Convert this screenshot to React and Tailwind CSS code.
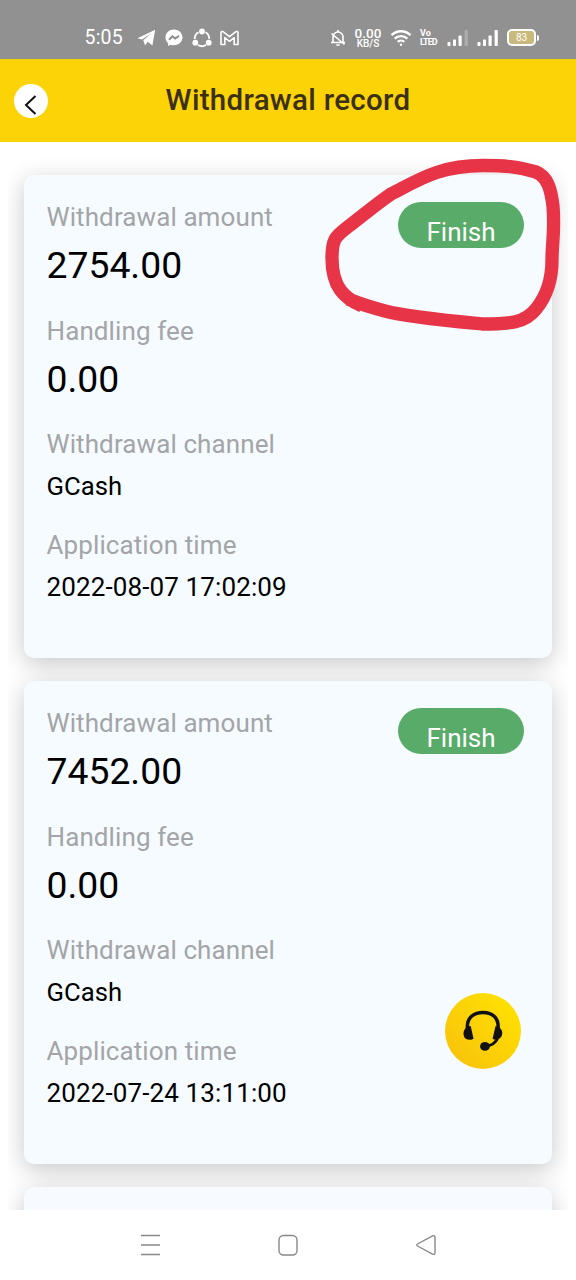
import React from 'react';

const records = [
  { amount: '2754.00', fee: '0.00', channel: 'GCash', time: '2022-08-07 17:02:09' },
  { amount: '7452.00', fee: '0.00', channel: 'GCash', time: '2022-07-24 13:11:00' },
];

function SignalBars({ dim }) {
  return (
    <svg className="h-[18px] w-[22px]" viewBox="0 0 22 18" fill="#fff">
      <rect x="0.5" y="13" width="3" height="4" rx="0.8" />
      <rect x="6" y="10.5" width="3" height="6.5" rx="0.8" />
      <rect x="11.5" y="6.5" width="3.2" height="10.5" rx="0.8" />
      <rect x="17.6" y="1" width="3.2" height="16" rx="0.8" fillOpacity={dim ? 0.25 : 1} />
    </svg>
  );
}

function StatusBar() {
  return (
    <header className="flex h-[59px] shrink-0 items-center bg-[#919191] pt-[16px] pl-[84.5px] text-white">
      <div className="flex h-[22px] w-[38.5px] items-center text-[19.5px] tracking-[0.2px] whitespace-nowrap">5:05</div>
      <svg className="ml-[14px] h-[18px] w-[20px]" viewBox="0 0 20 18" fill="#fff">
        <path d="M0.5 9.3 18.2 0.8 15.4 16.4 10.7 12.8 8.1 16.4 6.3 11.2 14.3 4.3 5 10.4z" />
      </svg>
      <svg className="ml-[8px] h-[18px] w-[18px]" viewBox="0 0 18 18">
        <path d="M9 .6C4.3.6.5 4 .5 8.6c0 2.4 1 4.4 2.6 5.7v2.7l2.5-1.3c1 .4 2.2.6 3.4.6 4.7 0 8.5-3.3 8.500-7.7S13.7.6 9 .6z" fill="#fff" />
        <path d="M4 10.8 7.3 7.3 10.2 9.6 14 6.8" fill="none" stroke="#8b8b8b" strokeWidth="1.9" />
      </svg>
      <svg className="ml-[9px] h-[20px] w-[20px]" viewBox="0 0 20 20">
        <path d="M6.5 4.2A7.2 7.2 0 0 0 2.8 11M6 17a7.5 7.5 0 0 0 8 0M17.2 11A7.2 7.2 0 0 0 13.5 4.2" fill="none" stroke="#fff" strokeWidth="1.8" />
        <circle cx="10" cy="3.5" r="2.9" fill="#fff" />
        <circle cx="3.3" cy="14.7" r="2.9" fill="#fff" />
        <circle cx="16.7" cy="14.7" r="2.9" fill="#fff" />
      </svg>
      <svg className="ml-[8px] h-[16px] w-[19px]" viewBox="0 0 19 16" fill="none" stroke="#fff" strokeWidth="1.6" strokeLinejoin="round">
        <path d="M1 14.5V2.6Q1.2 1 3 1.6L9.5 6.7 16 1.6Q17.8 1 18 2.6V14.5H14.2V7.7L9.5 11.3 4.8 7.7V14.5z" />
      </svg>

      <svg className="ml-[91px] h-[18px] w-[16px]" viewBox="0 0 16 18" fill="none" stroke="#fff" strokeWidth="1.6">
        <path d="M3 13V8a5 5 0 0 1 10 0v5M1 13.5h14M8 1v2M6.3 16h3.4M1.5 4.5 14.5 15.5" />
      </svg>
      <div className="ml-[7px] flex w-[30px] flex-col items-center whitespace-nowrap font-medium">
        <span className="text-[13.5px] leading-[12px]">0.00</span>
        <span className="text-[10px] leading-[10px]">KB/S</span>
      </div>
      <svg className="ml-[7px] h-[18px] w-[22px]" viewBox="0 0 22 18" fill="none" stroke="#fff" strokeWidth="2.4">
        <path d="M1.5 6.2a13.500 13.500 0 0 1 19 0M4.7 9.7a9 9 0 0 1 12.6 0M7.7 12.9a4.8 4.8 0 0 1 6.6 0" />
        <circle cx="11" cy="15.7" r="1.2" fill="#fff" stroke="none" />
      </svg>
      <div className="ml-[8px] flex w-[20px] flex-col whitespace-nowrap font-bold">
        <span className="text-[9px] leading-[9px]">Vo</span>
        <span className="text-[9px] leading-[9px] tracking-[-0.9px]">LTED</span>
      </div>
      <div className="ml-[7px] flex gap-[8px]">
        <SignalBars dim />
        <SignalBars />
      </div>
      <div className="ml-[8px] flex h-[17px] w-[29px] items-center justify-center rounded-[5px] border-2 border-white bg-[#c9b97d] text-[10px]">83</div>
      <div className="ml-px h-[6px] w-[2px] rounded-r bg-white" />
    </header>
  );
}

function TitleBar() {
  return (
    <div className="flex h-[83px] shrink-0 items-center bg-[#fcd306] pl-[14px]">
      <button className="flex h-[34px] w-[34px] items-center justify-center rounded-full bg-white">
        <svg className="mt-[9px] h-[20px] w-[14px]" viewBox="0 0 14 20" fill="none" stroke="#111" strokeWidth="2">
          <path d="M11.5 1 2 10 11.5 19" />
        </svg>
      </button>
      <h1 className="w-[480px] text-center text-[29.5px] font-medium tracking-[0.3px] whitespace-nowrap text-[#3b3013]">Withdrawal record</h1>
    </div>
  );
}

function Label({ children }) {
  return <div className="text-[26px] leading-[42px] tracking-[0.1px] text-[#a3a5a8]">{children}</div>;
}

function RecordCard({ record }) {
  return (
    <article className="flex h-[483px] shrink-0 justify-between rounded-[10px] bg-[#f6fbff] pt-[21px] pr-[28px] pl-[22.5px] shadow-[0_6px_24px_rgba(0,0,0,0.22)]">
      <div className="whitespace-nowrap">
        <Label>Withdrawal amount</Label>
        <div className="mb-[17.5px] text-[37.3px] leading-[54px]">{record.amount}</div>
        <Label>Handling fee</Label>
        <div className="mb-[17.5px] text-[37.3px] leading-[54px]">{record.fee}</div>
        <Label>Withdrawal channel</Label>
        <div className="mb-[16.5px] text-[25.7px] leading-[42px]">{record.channel}</div>
        <Label>Application time</Label>
        <div className="text-[26px] leading-[42px] tracking-[0.12px]">{record.time}</div>
      </div>
      <div className="mt-[6px] h-[46px] w-[126px] overflow-hidden rounded-full bg-[#58ab69] pt-[9px] text-center text-[26px] leading-[42px] text-white">
        Finish
      </div>
    </article>
  );
}

function NavBar() {
  return (
    <nav className="flex h-[70px] shrink-0 items-center justify-between bg-white px-[138px]">
      <svg className="h-[24px] w-[24px]" viewBox="0 0 24 24" stroke="#888" strokeWidth="1.5">
        <path d="M3 2.5h19M3 12h19M3 21.5h19" />
      </svg>
      <svg className="h-[24px] w-[24px]" viewBox="0 0 24 24" fill="none" stroke="#888" strokeWidth="1.4">
        <rect x="3" y="2.5" width="18" height="19.5" rx="4.5" />
      </svg>
      <svg className="h-[24px] w-[24px]" viewBox="0 0 24 24" fill="none" stroke="#888" strokeWidth="1.4" strokeLinejoin="round">
        <path d="M3.5 11 18.5 2.8Q21 2 21 4.5V19.5Q21 22 18.5 21.2L3.5 13Q2 12 3.5 11z" />
      </svg>
    </nav>
  );
}

export default function App() {
  return (
    <div className="relative flex h-[1280px] w-[576px] flex-col overflow-hidden bg-white font-[Roboto,sans-serif] text-black">
      <StatusBar />
      <TitleBar />
      <main className="mx-[8px] flex h-[1068px] shrink-0 flex-col gap-[23px] overflow-hidden px-[16px] pt-[33px]">
        {records.map((record) => (
          <RecordCard key={record.time} record={record} />
        ))}
        <div className="h-[60px] shrink-0 rounded-[10px] bg-[#f7fafe] shadow-[0_6px_24px_rgba(0,0,0,0.22)]" />
      </main>
      <NavBar />

      <button className="absolute top-[993px] left-[445px] flex h-[76px] w-[76px] items-center justify-center rounded-full bg-linear-to-tr from-[#f8bf0c] to-[#ffe500]">
        <svg className="mb-[3px] h-[43px] w-[42px]" viewBox="0 0 42 44" fill="none">
          <path d="M5 23v-4C5 9.5 12 4.5 21 4.5S36.5 9.5 36.5 19v4" stroke="#111" strokeWidth="3.6" />
          <path d="M7.5 18.5Q1 20 1 26.5 1.5 33 9 32.5L11.3 31.5 8.5 18.8zM33.8 18.8 30.8 31.5 33 32.5Q40.5 32 40.8 25.5 40.5 20 33.8 18.5z" fill="#111" />
          <path d="M36 31Q33 38 24 39" stroke="#111" strokeWidth="3" />
          <ellipse cx="23" cy="39.3" rx="5" ry="4.5" fill="#111" />
        </svg>
      </button>

      <svg className="pointer-events-none absolute top-[150px] left-[310px] h-[190px] w-[266px]" viewBox="0 0 266 190" fill="none">
        <path
          d="M52 156C34 148 22 137 22 108 22 88 26 86 39 76 55 64 65 55 81 44 107 31 128 15.5 173 15.5 198 15.500 208 17 226 22 238 27 241 40 243 56 245 82 242 92 242 110 242 132 235 148 226 159 215 173 200 174 172 174 141 171 97 167 75 161 60 157 48 153 38 149"
          stroke="#e73447"
          strokeWidth="13.3"
          strokeLinejoin="round"
        />
      </svg>
    </div>
  );
}
